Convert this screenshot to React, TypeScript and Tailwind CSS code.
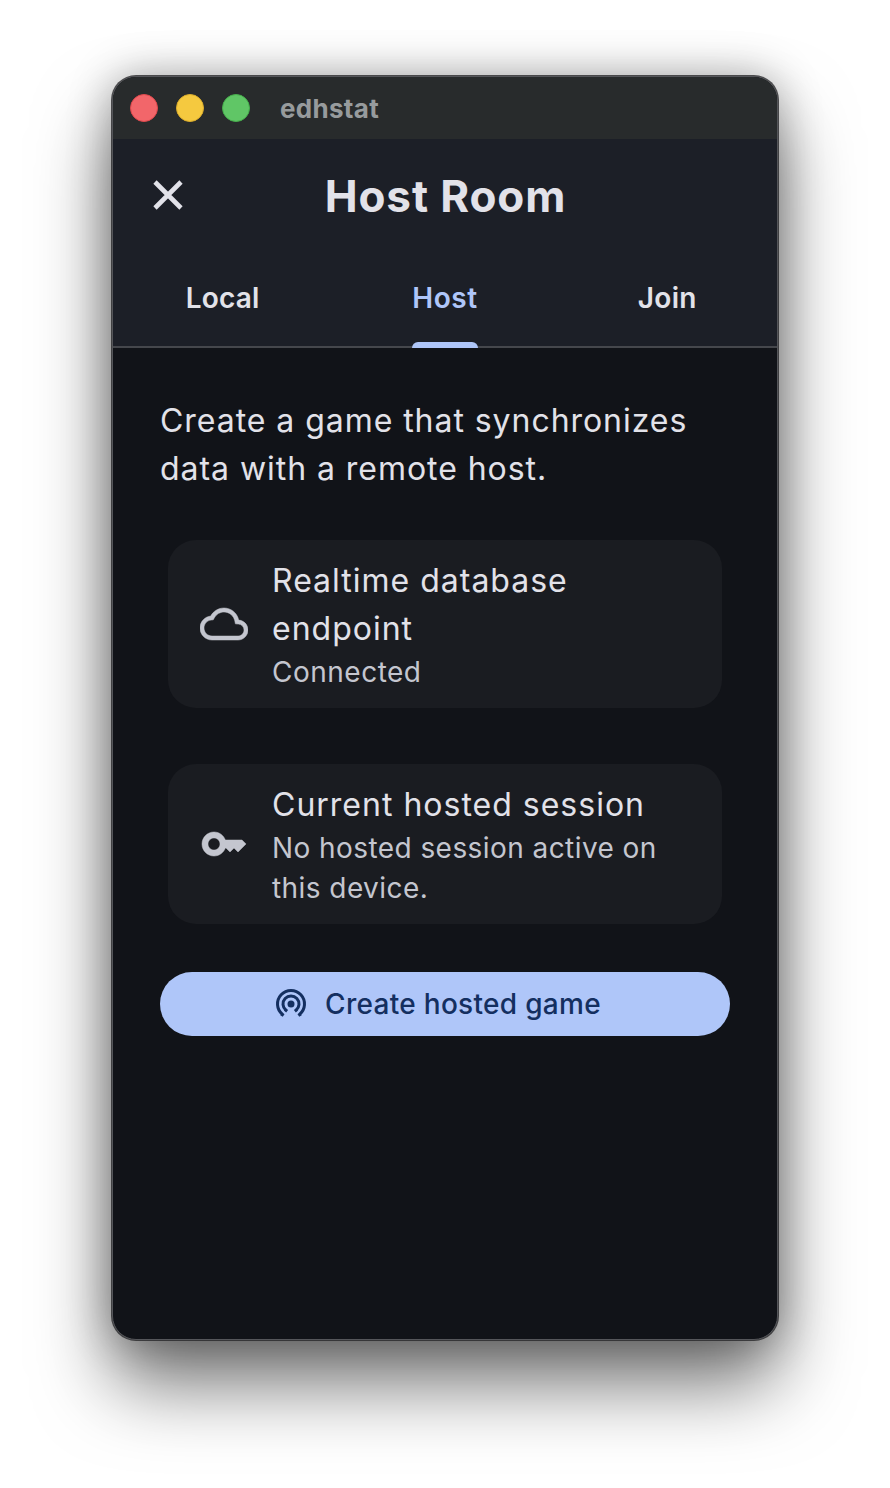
function CloseIcon() {
  return (
    <svg width="34" height="34" viewBox="0 0 34 34" fill="none" stroke="currentColor" strokeWidth="4.6" className="absolute left-[38px] top-[39px] text-[#e2e2e9]">
      <path d="M4 4l26 26M30 4L4 30" />
    </svg>
  )
}

function CloudIcon() {
  return (
    <svg width="48" height="48" viewBox="0 0 24 24" fill="currentColor" stroke="currentColor" strokeWidth="0.25" className="shrink-0 text-[#c4c6cf]">
      <path d="M19.35 10.04C18.67 6.59 15.64 4 12 4 9.11 4 6.6 5.64 5.35 8.04 2.34 8.36 0 10.91 0 14c0 3.31 2.69 6 6 6h13c2.76 0 5-2.24 5-5 0-2.64-2.05-4.78-4.65-4.96zM19 18H6c-2.21 0-4-1.79-4-4 0-2.05 1.53-3.76 3.56-3.97l1.07-.11.5-.95C8.08 7.14 9.94 6 12 6c2.62 0 4.88 1.86 5.39 4.43l.3 1.5 1.53.11c1.56.1 2.78 1.41 2.78 2.96 0 1.65-1.35 3-3 3z" />
    </svg>
  )
}

function KeyIcon() {
  return (
    <svg width="48" height="48" viewBox="0 0 24 24" fill="currentColor" stroke="currentColor" strokeWidth="0.25" className="shrink-0 text-[#c4c6cf]">
      <path d="M21 10h-8.35C11.83 7.67 9.61 6 7 6c-3.31 0-6 2.69-6 6s2.69 6 6 6c2.61 0 4.83-1.67 5.65-4H13l2 2 2-2 2 2 4-4.04L21 10zM7 15c-1.65 0-3-1.35-3-3s1.35-3 3-3 3 1.35 3 3-1.35 3-3 3z" />
    </svg>
  )
}

function TetheringIcon() {
  return (
    <svg width="32" height="32" viewBox="0 0 32 32" fill="none" stroke="currentColor" strokeWidth="3" className="mr-[18px]">
      <path d="M6.5 28L7.5 26.5A13.5 13.5 0 1 1 24.5 26.5L25.5 28" />
      <path d="M10 23.5L11 22.25A8 8 0 1 1 21 22.25L22 23.5" />
      <circle cx="16" cy="16" r="3.5" fill="currentColor" stroke="none" />
    </svg>
  )
}

export default function App() {
  return (
    <div className="w-[890px] h-[1488px] bg-white pt-[76px] pl-[112px] overflow-hidden font-['Inter',sans-serif]">
      <div className="w-[666px] h-[1264px] rounded-[24px] bg-[#111318] border border-[#55565a] overflow-hidden flex flex-col shadow-[0_0_0_1px_rgba(40,40,42,0.8),0_44px_76px_rgba(0,0,0,0.55),0_0_44px_rgba(0,0,0,0.3)]">
        <div className="h-[62px] bg-[#282b2c] flex items-center pl-[17px] shrink-0">
          <div className="w-7 h-7 rounded-full bg-[#f2666a] border border-[#e0484c]" />
          <div className="w-7 h-7 rounded-full bg-[#f5c93f] border border-[#dcae2c] ml-[18px]" />
          <div className="w-7 h-7 rounded-full bg-[#60c666] border border-[#46ae4c] ml-[18px]" />
          <span className="ml-[30px] text-[26px] font-bold tracking-[0.3px] text-[#979b9d]">edhstat</span>
        </div>

        <div className="bg-[#1c1f27] h-[209px] shrink-0 border-b-2 border-[#45474c] flex flex-col">
          <div className="relative h-[114px] flex items-center justify-center pl-[1px]">
            <CloseIcon />
            <h1 className="text-[44px] font-bold text-[#e2e2e9] tracking-[0.9px]">Host Room</h1>
          </div>
          <div className="grid grid-cols-3 flex-1">
            <div className="flex justify-center pt-[24px] pr-[2px] text-[28px] font-semibold tracking-[0.2px] text-[#e2e2e9]">Local</div>
            <div className="relative flex justify-center pt-[24px] text-[28px] font-semibold tracking-[0.6px] text-[#afc6f9]">
              Host
              <div className="absolute -bottom-[2px] left-1/2 -translate-x-1/2 w-[66px] h-[6px] rounded-t-[6px] bg-[#afc6f9]" />
            </div>
            <div className="flex justify-center pt-[24px] pl-[2px] text-[28px] font-semibold tracking-[0.3px] text-[#e2e2e9]">Join</div>
          </div>
        </div>

        <div className="px-[47px] pt-[49px]">
          <p className="text-[32px] leading-[48px] tracking-[0.95px] text-[#e2e2e9]">
            Create a game that synchronizes data with a remote host.
          </p>

          <div className="mt-[47px] mx-[8px] h-[168px] rounded-[28px] bg-[#1a1c21] flex items-center pl-[32px] pr-[24px]">
            <CloudIcon />
            <div className="ml-[24px]">
              <div className="mt-[1px] text-[32px] leading-[48px] tracking-[1px] text-[#e2e2e9]">Realtime database endpoint</div>
              <div className="-mt-[1px] text-[28px] leading-[40px] tracking-[0.5px] text-[#c4c6cf]">Connected</div>
            </div>
          </div>

          <div className="mt-[56px] mx-[8px] h-[160px] rounded-[28px] bg-[#1a1c21] flex items-center pl-[32px] pr-[24px]">
            <KeyIcon />
            <div className="ml-[24px]">
              <div className="mt-[1px] text-[32px] leading-[48px] tracking-[1px] text-[#e2e2e9]">Current hosted session</div>
              <div className="-mt-[1px] text-[28px] leading-[40px] tracking-[0.43px] text-[#c4c6cf]">No hosted session active on this device.</div>
            </div>
          </div>

          <button className="mt-[48px] w-[570px] h-[64px] rounded-full bg-[#afc6f9] flex items-center justify-center pr-[14px] text-[#142f60] text-[28px] font-medium tracking-[0.3px]">
            <TetheringIcon />
            Create hosted game
          </button>
        </div>
      </div>
    </div>
  )
}
